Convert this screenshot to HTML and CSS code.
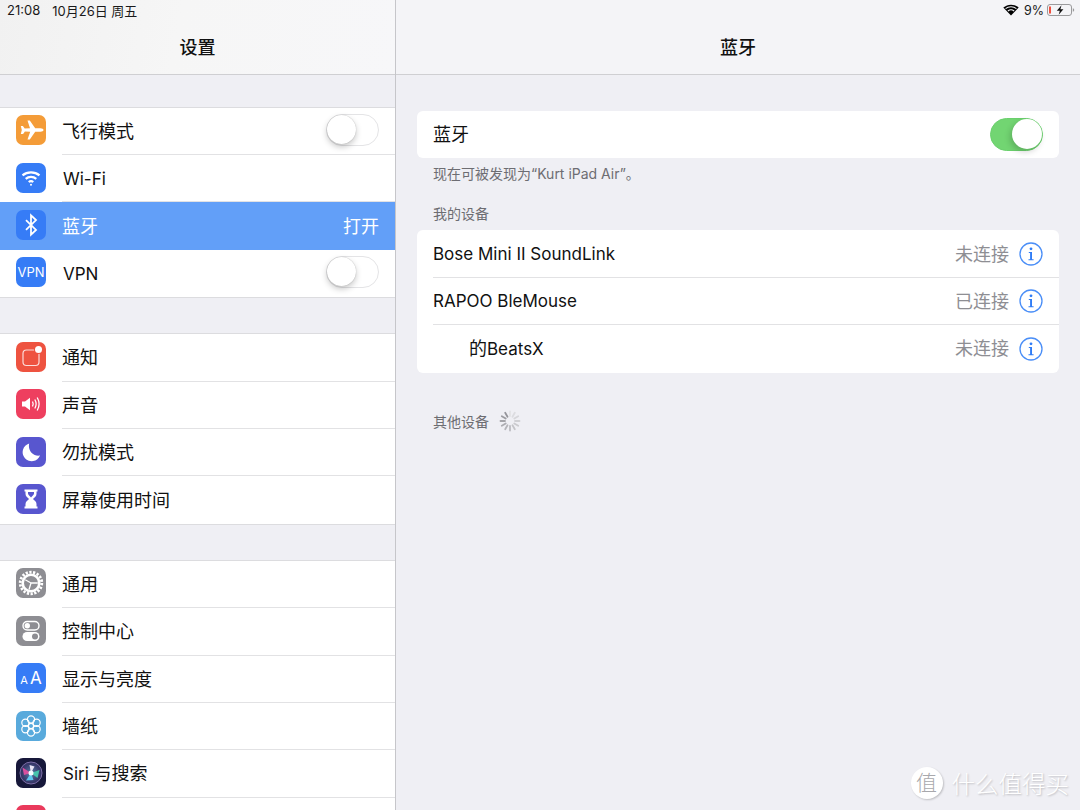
FILE: index.html
```html
<!DOCTYPE html>
<html lang="zh-CN">
<head>
    <meta charset="UTF-8">
    <title>蓝牙</title>
    <link rel="stylesheet" href="styles.css">
</head>
<body>
    <div class="screen">
        <div class="sidebar">
            <div class="navbar navbar-left">
                <div class="status">
                    <span>21:08</span>
                    <span>10月26日 周五</span>
                </div>
                <div class="nav-title">设置</div>
            </div>

            <div class="group">
                <div class="row">
                    <div class="icon orange">
                        <svg viewBox="0 0 30 30"><path d="M11.500 5.500h2.300l5.400 7.800h5.300c1.600 0 3 .7 3 1.700s-1.400 1.700-3 1.700h-5.300l-5.400 7.800h-2.300l2.700-7.800-5.300-.1-1.800 2.300H4.800l1-3.900-1-3.900h2.100l1.800 2.300 5.300-.1z" fill="#fff"/></svg>
                    </div>
                    <div class="row-body">
                        <span class="label">飞行模式</span>
                        <span class="switch"><span class="knob"></span></span>
                    </div>
                </div>
                <div class="row">
                    <div class="icon blue">
                        <svg viewBox="0 0 30 30" fill="none" stroke="#fff" stroke-width="2.200"><path d="M6.500 12.300c4.800-4 12.200-4 17 0"/><path d="M9.700 15.800c3-2.500 7.600-2.500 10.600 0"/><path d="M12.700 19c1.300-1 3.300-1 4.600 0"/><circle cx="15" cy="21.700" r="1" fill="#fff" stroke="none"/></svg>
                    </div>
                    <div class="row-body">
                        <span class="label latin">Wi-Fi</span>
                    </div>
                </div>
                <div class="row row-active">
                    <div class="icon blue">
                        <svg viewBox="0 0 30 30" fill="none" stroke="#fff" stroke-width="1.800"><path d="M10 10.200l10 9.700-5 4.700V5.400l5 4.700-10 9.700"/></svg>
                    </div>
                    <div class="row-body">
                        <span class="label">蓝牙</span>
                        <span class="row-value">打开</span>
                    </div>
                </div>
                <div class="row">
                    <div class="icon blue">
                        <span class="icon-text">VPN</span>
                    </div>
                    <div class="row-body">
                        <span class="label latin">VPN</span>
                        <span class="switch"><span class="knob"></span></span>
                    </div>
                </div>
            </div>

            <div class="group">
                <div class="row">
                    <div class="icon red">
                        <svg viewBox="0 0 30 30"><rect x="7" y="8" width="16" height="15.500" rx="3.500" fill="none" stroke="#fff" stroke-opacity=".8" stroke-width="1.200"/><circle cx="22.500" cy="7.500" r="4.600" fill="#ee5340"/><circle cx="22.500" cy="7.500" r="3.500" fill="#fff"/></svg>
                    </div>
                    <div class="row-body">
                        <span class="label">通知</span>
                    </div>
                </div>
                <div class="row">
                    <div class="icon pink">
                        <svg viewBox="0 0 30 30" fill="none" stroke="#fff" stroke-width="1.300"><path d="M6 12.500h3l5-3.700v12.400l-5-3.700H6z" fill="#fff" stroke="none"/><path d="M16.500 12.500c.9 1.600.9 3.400 0 5"/><path d="M18.800 10.500c1.700 2.900 1.700 6.100 0 9"/><path d="M21.200 8.500c2.500 4.300 2.500 8.700 0 13"/></svg>
                    </div>
                    <div class="row-body">
                        <span class="label">声音</span>
                    </div>
                </div>
                <div class="row">
                    <div class="icon indigo">
                        <svg viewBox="0 0 30 30"><path d="M13.200 6.500a9 9 0 1 0 10.800 12c-6.500 1.200-12.500-4.800-10.800-12z" fill="#fff"/></svg>
                    </div>
                    <div class="row-body">
                        <span class="label">勿扰模式</span>
                    </div>
                </div>
                <div class="row">
                    <div class="icon indigo">
                        <svg viewBox="0 0 30 30"><path d="M8.500 5.500h13v2h-1v2.500c0 2.500-2.500 3.700-3.500 5 1 1.300 3.500 2.500 3.500 5v2.500h1v2h-13v-2h1V20c0-2.500 2.500-3.700 3.500-5-1-1.300-3.500-2.500-3.500-5V7.500h-1z" fill="#fff"/><path d="M12 8h6v1.500c0 1.500-2 2.500-3 4-1-1.500-3-2.500-3-4z" fill="#5856cf"/></svg>
                    </div>
                    <div class="row-body">
                        <span class="label">屏幕使用时间</span>
                    </div>
                </div>
            </div>

            <div class="group">
                <div class="row">
                    <div class="icon grey">
                        <svg viewBox="0 0 30 30" fill="none" stroke="#fff"><circle cx="15" cy="15" r="10.800" stroke-width="2.800" stroke-dasharray="2.260 1.500"/><circle cx="15" cy="15" r="8.300" stroke-width="2.600"/><path d="M15 15L9.200 11.800M15 15h6.800M15 15l-2 6.500" stroke-width="1.300"/></svg>
                    </div>
                    <div class="row-body">
                        <span class="label">通用</span>
                    </div>
                </div>
                <div class="row">
                    <div class="icon grey">
                        <svg viewBox="0 0 30 30"><rect x="7" y="5.500" width="16" height="8.500" rx="4.250" fill="none" stroke="#fff" stroke-width="1.400"/><circle cx="11.300" cy="9.750" r="2.700" fill="#fff"/><rect x="6.500" y="16" width="17" height="9" rx="4.500" fill="#fff"/><circle cx="19" cy="20.500" r="3" fill="#8e8e93"/></svg>
                    </div>
                    <div class="row-body">
                        <span class="label">控制中心</span>
                    </div>
                </div>
                <div class="row">
                    <div class="icon blue">
                        <span class="icon-text icon-aa"><small>A</small>A</span>
                    </div>
                    <div class="row-body">
                        <span class="label">显示与亮度</span>
                    </div>
                </div>
                <div class="row">
                    <div class="icon sky">
                        <svg viewBox="0 0 30 30" fill="none" stroke="#fff" stroke-width="1.200"><circle cx="15" cy="15" r="2.600"/><circle cx="15" cy="8.500" r="3.600"/><circle cx="15" cy="21.500" r="3.600"/><circle cx="9.400" cy="11.750" r="3.600"/><circle cx="20.600" cy="11.750" r="3.600"/><circle cx="9.400" cy="18.250" r="3.600"/><circle cx="20.600" cy="18.250" r="3.600"/></svg>
                    </div>
                    <div class="row-body">
                        <span class="label">墙纸</span>
                    </div>
                </div>
                <div class="row">
                    <div class="icon siri">
                        <svg viewBox="0 0 30 30">
                            <defs>
                                <radialGradient id="siriGlow"><stop offset="0" stop-color="#5c7fa8"/><stop offset=".75" stop-color="#3a3f70"/><stop offset="1" stop-color="#33305f"/></radialGradient>
                                <filter id="siriBlur"><feGaussianBlur stdDeviation=".7"/></filter>
                            </defs>
                            <circle cx="15" cy="15" r="11" fill="url(#siriGlow)" stroke="#7d6fa8" stroke-width="1"/>
                            <g filter="url(#siriBlur)">
                                <path d="M15 15L6.500 9.500 8 17z" fill="#d94f9f"/>
                                <path d="M15 15l8.500-3-2 8z" fill="#44d6b4" opacity=".85"/>
                                <path d="M15 15l-5 7.500 7.500-.5z" fill="#5fc6ef"/>
                                <path d="M15 15l-1.500-8 5 1.500z" fill="#e8e4f4"/>
                                <circle cx="15" cy="15" r="2.500" fill="#f4fbff"/>
                            </g>
                        </svg>
                    </div>
                    <div class="row-body">
                        <span class="label"><span class="latin">Siri </span>与搜索</span>
                    </div>
                </div>
                <div class="row">
                    <div class="icon rose"></div>
                    <div class="row-body"></div>
                </div>
            </div>
        </div>

        <div class="detail">
            <div class="navbar">
                <div class="status status-right">
                    <svg class="wifi-small" viewBox="0 0 16 12"><path d="M8 11.500L.3 3.600C4.700-.3 11.300-.3 15.700 3.600z" fill="#000"/><path d="M2.600 4.700c3-2.600 7.800-2.600 10.800 0M4.900 7c1.800-1.500 4.400-1.500 6.200 0" fill="none" stroke="#f4f4f7" stroke-width="1.100"/></svg>
                    <span class="battery-pct">9%</span>
                    <svg class="battery" viewBox="0 0 28 12"><rect x=".5" y=".5" width="24" height="11" rx="2.500" fill="none" stroke="#9a9a9c"/><rect x="2" y="2.500" width="2" height="7" fill="#f0503f"/><path d="M25.800 4.200c1 .3 1.400 1 1.400 1.800s-.4 1.500-1.400 1.800z" fill="#9a9a9c"/><path d="M14.500 1.300L9.800 6.800h3l-1.100 3.900 4.700-5.500h-3z" fill="#111"/></svg>
                </div>
                <div class="nav-title">蓝牙</div>
            </div>

            <div class="content">
                <div class="card">
                    <div class="card-row card-row-cjk">
                        <span class="label">蓝牙</span>
                        <span class="switch switch-on"><span class="knob"></span></span>
                    </div>
                </div>
                <div class="caption">现在可被发现为“Kurt iPad Air”。</div>
                <div class="section-title">我的设备</div>
                <div class="card">
                    <div class="card-row">
                        <span class="label latin">Bose Mini II SoundLink</span>
                        <span class="device-state">未连接</span>
                        <svg class="info-btn" viewBox="0 0 24 24"><circle cx="12" cy="12" r="11" fill="none" stroke="#4a8ef7" stroke-width="1.300"/><circle cx="12" cy="6.800" r="1.400" fill="#2f7cf6"/><path d="M9.800 10h3.200v7.200h1.600v1H9.500v-1h1.600V11H9.800z" fill="#2f7cf6"/></svg>
                    </div>
                    <div class="card-row">
                        <span class="label latin">RAPOO BleMouse</span>
                        <span class="device-state">已连接</span>
                        <svg class="info-btn" viewBox="0 0 24 24"><circle cx="12" cy="12" r="11" fill="none" stroke="#4a8ef7" stroke-width="1.300"/><circle cx="12" cy="6.800" r="1.400" fill="#2f7cf6"/><path d="M9.800 10h3.200v7.200h1.600v1H9.500v-1h1.600V11H9.800z" fill="#2f7cf6"/></svg>
                    </div>
                    <div class="card-row card-row-last">
                        <span class="label label-indent">的<span class="latin">BeatsX</span></span>
                        <span class="device-state">未连接</span>
                        <svg class="info-btn" viewBox="0 0 24 24"><circle cx="12" cy="12" r="11" fill="none" stroke="#4a8ef7" stroke-width="1.300"/><circle cx="12" cy="6.800" r="1.400" fill="#2f7cf6"/><path d="M9.800 10h3.200v7.200h1.600v1H9.500v-1h1.600V11H9.800z" fill="#2f7cf6"/></svg>
                    </div>
                </div>
                <div class="section-title section-other">
                    <span>其他设备</span>
                    <svg class="spinner" viewBox="0 0 22 22" stroke-width="1.800" stroke-linecap="round">
                        <path d="M11 1.500v4.500" stroke="#e2e2e5"/>
                        <path d="M15.800 2.800l-2.300 3.900" stroke="#dcdce0"/>
                        <path d="M19.200 6.200l-3.900 2.300" stroke="#d6d6da"/>
                        <path d="M20.500 11H16" stroke="#d0d0d4"/>
                        <path d="M19.200 15.800l-3.900-2.300" stroke="#cacace"/>
                        <path d="M15.800 19.200l-2.300-3.900" stroke="#c4c4c8"/>
                        <path d="M11 20.500V16" stroke="#bcbcc1"/>
                        <path d="M6.200 19.200l2.300-3.900" stroke="#b4b4b9"/>
                        <path d="M2.800 15.800l3.900-2.300" stroke="#acacb1"/>
                        <path d="M1.500 11H6" stroke="#a4a4a9"/>
                        <path d="M2.800 6.200l3.900 2.300" stroke="#9c9ca1"/>
                        <path d="M6.200 2.800l2.300 3.900" stroke="#94949a"/>
                    </svg>
                </div>
            </div>
        </div>

        <div class="watermark">
            <span class="watermark-badge">值</span>
            <span>什么值得买</span>
        </div>
    </div>
</body>
</html>
```

FILE: styles.css
```css
* {
    box-sizing: border-box;
}

html,
body {
    margin: 0;
    height: 810px;
    overflow: hidden;
}

body {
    font-family: Inter, "Noto Sans CJK SC", sans-serif;
    background-color: #efeff4;
    color: #111;
}

.screen {
    position: relative;
    display: flex;
    width: 1080px;
    height: 810px;
    overflow: hidden;
}

.sidebar {
    width: 396px;
    height: 810px;
    flex: none;
    border-right: 1px solid #c6c6ca;
    overflow: hidden;
}

.detail {
    flex: 1;
    min-width: 0;
}

.navbar {
    height: 75px;
    background-color: #f4f4f7;
    border-bottom: 1px solid #cfcfd2;
}

.navbar-left {
    background: linear-gradient(100deg, #f1f1f1 0%, #f6f6f6 45%, #f7f7f9 100%);
}

.status {
    display: flex;
    align-items: center;
    height: 20px;
    padding: 0 7px;
    font-size: 13px;
    gap: 12px;
    color: #1a1a1a;
}

.status-right {
    justify-content: flex-end;
    gap: 4px;
    padding: 0 5px 0 0;
}

.battery-pct {
    margin: 0 -1px 0 1px;
    font-size: 12.500px;
}

.wifi-small {
    width: 16px;
    height: 12px;
}

.battery {
    width: 28px;
    height: 12px;
}

.nav-title {
    margin-top: 12px;
    height: 32px;
    line-height: 32px;
    text-align: center;
    font-size: 18px;
    font-weight: 500;
}

.group {
    margin-top: 35px;
    background-color: #fff;
    border-top: 1px solid #dcdcdf;
    border-bottom: 1px solid #dcdcdf;
}

.navbar + .group {
    margin-top: 31.600px;
}

.group:last-child {
    border-bottom: none;
}

.row {
    display: flex;
    align-items: center;
    height: 47.400px;
    padding-left: 16px;
    gap: 16px;
}

.row-body {
    flex: 1;
    align-self: stretch;
    display: flex;
    align-items: center;
    justify-content: space-between;
    padding: 0 16px 2px 0;
    border-bottom: 1px solid #e2e2e4;
}

.row-body .latin {
    padding-left: 1px;
}

.row-body > .latin {
    margin-top: 3px;
}

.row:last-child .row-body {
    border-bottom: none;
}

.row-active {
    background-color: #629ff8;
    color: #fff;
}

.row-active .row-body {
    border-bottom-color: transparent;
}

.row-value {
    font-size: 18px;
}

.label {
    font-size: 18px;
    white-space: nowrap;
}

.latin {
    font-size: 17px;
}

.icon {
    width: 30px;
    height: 30px;
    margin-top: -2px;
    flex: none;
    border-radius: 7px;
    display: flex;
    align-items: center;
    justify-content: center;
    overflow: hidden;
}

.icon svg {
    width: 30px;
    height: 30px;
    display: block;
}

.icon-text {
    color: #fff;
    font-size: 13px;
}

.icon-aa {
    font-size: 17px;
}

.icon-aa small {
    font-size: 11px;
    margin-right: 2px;
}

.orange { background-color: #f49c38; }
.blue { background-color: #367cf6; }
.red { background-color: #ee5340; }
.pink { background-color: #ee3f5f; }
.indigo { background-color: #5856cf; }
.grey { background-color: #8e8e93; }
.sky { background-color: #59aadc; }
.siri { background-color: #17183a; }
.rose { background-color: #ea3a5c; }

.switch {
    position: relative;
    width: 53px;
    height: 32px;
    border-radius: 17px;
    border: 1.500px solid #e4e4e6;
    background-color: #fff;
    flex: none;
}

.knob {
    position: absolute;
    top: 0;
    left: 0;
    width: 29px;
    height: 29px;
    border-radius: 50%;
    background-color: #fff;
    box-shadow: 0 3px 6px rgba(0, 0, 0, .22), 0 0 1px rgba(0, 0, 0, .3);
}

.switch-on {
    height: 33px;
    border-color: #6bd06d;
    background-color: #72d572;
}

.switch-on .knob {
    left: auto;
    right: 0;
    width: 30px;
    height: 30px;
    box-shadow: -2px 3px 6px rgba(0, 0, 0, .18);
}

.content {
    padding: 36px 21px 0;
}

.card {
    background-color: #fff;
    border-radius: 6px;
}

.card-row {
    display: flex;
    align-items: center;
    height: 47.400px;
    margin-left: 16px;
    padding-right: 16px;
    border-bottom: 1px solid #e2e2e4;
}

.card-row:last-child {
    border-bottom: none;
}

.card-row .label {
    margin-right: auto;
}

.card-row-cjk .label {
    padding-bottom: 4px;
}

.label-indent {
    padding-left: 36px;
    padding-bottom: 2px;
}

.device-state {
    font-size: 18px;
    color: #8e8e93;
    margin-right: 10px;
    padding-bottom: 2px;
}

.card-row-last .label,
.card-row-last .device-state {
    padding-bottom: 4px;
}

.info-btn {
    width: 24px;
    height: 24px;
    flex: none;
}

.caption {
    margin: 7px 16px 0;
    height: 17px;
    line-height: 17px;
    font-size: 14px;
    color: #6d6d72;
}

.section-title {
    margin: 23px 16px 8px;
    height: 17px;
    line-height: 17px;
    font-size: 14px;
    color: #6d6d72;
}

.section-other {
    display: flex;
    align-items: center;
    gap: 10px;
    margin-top: 40px;
}

.spinner {
    width: 22px;
    height: 22px;
    flex: none;
}

.watermark {
    position: absolute;
    right: 11px;
    bottom: 10px;
    display: flex;
    align-items: center;
    gap: 9px;
    font-size: 23.500px;
    font-weight: 300;
    color: #fff;
    text-shadow: 1px 1px 2px rgba(0, 0, 0, .22);
}

.watermark-badge {
    width: 32px;
    height: 32px;
    border-radius: 50%;
    background-color: #fff;
    color: #a8a8ac;
    font-size: 21px;
    line-height: 32px;
    text-align: center;
    text-shadow: none;
    box-shadow: 1px 1px 2px rgba(0, 0, 0, .2);
}
```
